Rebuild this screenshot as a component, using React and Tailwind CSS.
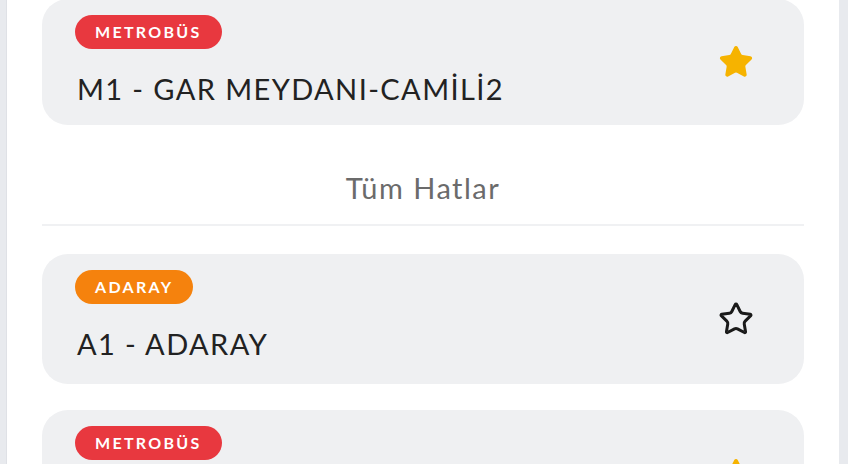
import { Star } from "lucide-react";

const lines = [
  { badge: "METROBÜS", color: "bg-[#e8383f]", name: "M1 - GAR MEYDANI-CAMİLİ2", fav: true },
];

const allLines = [
  { badge: "ADARAY", color: "bg-[#f5820d]", name: "A1 - ADARAY", fav: false },
  { badge: "METROBÜS", color: "bg-[#e8383f]", name: "M1 - GAR MEYDANI-CAMİLİ2", fav: true },
];

function LineCard({ line, height = "h-[130px]" }) {
  return (
    <div className={`${height} flex shrink-0 items-center justify-between rounded-[26px] bg-[#eff0f2] pl-[33px] pr-[50px]`}>
      <div className="flex flex-col items-start self-start pt-[16px]">
        <span
          className={`${line.color} flex h-[34px] items-center rounded-full px-[20px] text-[16px] font-bold tracking-[2.3px] text-white`}
        >
          {line.badge}
        </span>
        <span className="mt-[22px] pl-[2px] text-[29px] leading-[36px] tracking-[1.4px] text-[#222]">{line.name}</span>
      </div>
      {line.fav ? (
        <Star size={36} strokeWidth={1.5} className="fill-[#f6b300] text-[#f6b300]" />
      ) : (
        <Star size={36} strokeWidth={2} className="text-[#1a1a1a]" />
      )}
    </div>
  );
}

export default function App() {
  return (
    <div
      className="flex h-[464px] w-full overflow-hidden bg-[#e8eaee] pl-[6px] pr-[9px]"
      style={{ fontFamily: "Lato, 'Noto Sans', sans-serif" }}
    >
      <div className="flex flex-1 flex-col overflow-hidden border-l border-[#dfe1e6] bg-white px-[35px]">
        {/* favourites */}
        <div className="-mt-[1px] flex flex-col">
          {lines.map((l, i) => (
            <LineCard key={i} line={l} height="h-[126px]" />
          ))}
        </div>

        <div className="flex h-[99px] shrink-0 items-center justify-center pt-[26px] text-[29px] tracking-[1.5px] text-[#6b6b6b]">
          Tüm Hatlar
        </div>
        <div className="h-[2px] shrink-0 bg-[#f0f1f3]" />

        <div className="mt-[28px] flex flex-col gap-[26px]">
          {allLines.map((l, i) => (
            <LineCard key={i} line={l} />
          ))}
        </div>
      </div>
    </div>
  );
}
